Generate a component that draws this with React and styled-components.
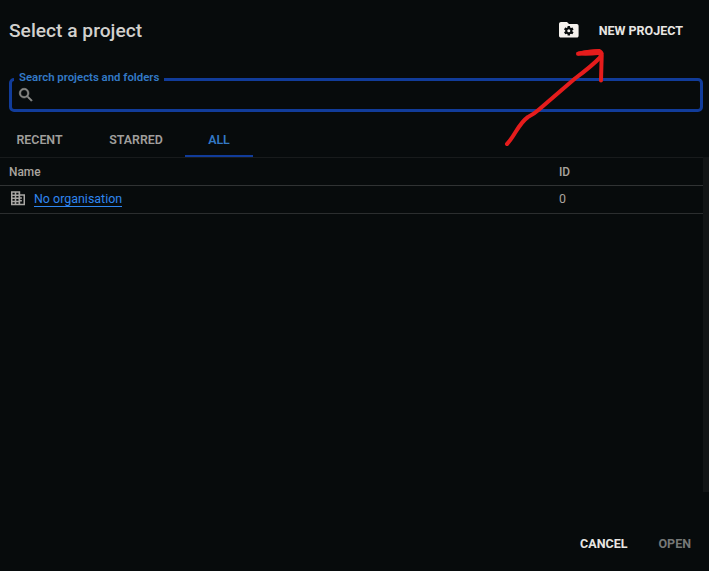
import React from 'react';
import styled, { createGlobalStyle } from 'styled-components';

const GlobalStyle = createGlobalStyle`
  *, *::before, *::after { box-sizing: border-box; }
  html, body { margin: 0; background: #070b0c; }
  body { overflow: hidden; font-family: Roboto, "Liberation Sans", sans-serif; }
  button { font-family: inherit; border: 0; padding: 0; background: none; }
`;

const Dialog = styled.main`
  position: relative;
  width: 709px;
  height: 571px;
  display: flex;
  flex-direction: column;
  background: #070b0c;
  color: #c9c9c7;
`;

const Header = styled.header`
  height: 78px;
  padding: 18px 26px 0 9px;
  display: flex;
  align-items: flex-start;
  justify-content: space-between;
`;

const Title = styled.h1`
  margin: 0;
  font-size: 19.2px;
  line-height: 25px;
  font-weight: 500;
  color: #d2d1ce;
  white-space: nowrap;
`;

const TextButton = styled.button`
  display: flex;
  align-items: center;
  gap: 18px;
  height: 24px;
  font-size: 12.5px;
  font-weight: 700;
  color: ${(p) => (p.$muted ? '#767877' : '#e8e6e3')};
  white-space: nowrap;
`;

const SearchField = styled.div`
  position: relative;
  height: 34px;
  margin: 0 6px 0 9px;
  padding-left: 5px;
  border: 3px solid #113c9a;
  border-radius: 5px;
  display: flex;
  align-items: center;
`;

const FieldLabel = styled.label`
  position: absolute;
  top: -11px;
  left: 2px;
  width: 150px;
  height: 14px;
  padding-left: 5px;
  background: #070b0c;
  color: #3379c6;
  font-size: 11.4px;
  line-height: 14px;
  font-weight: 600;
  white-space: nowrap;
`;

const Tabs = styled.nav`
  display: flex;
  height: 45px;
  padding-top: 11px;
`;

const Tab = styled.button`
  width: ${(p) => p.$width}px;
  margin-left: ${(p) => p.$gap || 0}px;
  height: 34px;
  font-size: 12.4px;
  font-weight: 600;
  color: ${(p) => (p.$active ? '#3379c6' : '#a09f9c')};
  border-bottom: 2px solid ${(p) => (p.$active ? '#113c9a' : 'transparent')};
`;

const ListArea = styled.section`
  height: 335px;
  display: flex;
`;

const Table = styled.div`
  flex: 1;
  border-top: 1px solid #181b1c;
`;

const Row = styled.div`
  display: grid;
  grid-template-columns: 550px 1fr;
  align-items: center;
  height: 28px;
  padding: 0 0 ${(p) => (p.$header ? 0 : 2)}px 9px;
  border-bottom: 1px solid ${(p) => (p.$header ? '#303334' : '#2b2e2f')};
  font-size: ${(p) => (p.$header ? 11.9 : 12.4)}px;
  font-weight: ${(p) => (p.$header ? 500 : 400)};
  color: #aaa59f;
`;

const NameCell = styled.div`
  display: flex;
  align-items: center;
  gap: 8px;
`;

const ProjectLink = styled.a`
  height: 16px;
  line-height: 16px;
  font-size: 12.45px;
  color: #2f86f0;
  border-bottom: 1px solid #2f86f0;
  white-space: nowrap;
`;

const ScrollTrack = styled.div`
  width: 6px;
  background: #121516;
`;

const Footer = styled.footer`
  flex: 1;
  display: flex;
  justify-content: flex-end;
  gap: 31px;
  padding: 39px 18px 0 0;
`;

const Arrow = styled.svg`
  position: absolute;
  left: 500px;
  top: 44px;
  pointer-events: none;
`;

const FolderGear = () => (
  <svg width="24" height="24" viewBox="0 0 24 24">
    <path
      fill="#f5f2ee"
      d="M4 4C2.9 4 2 4.9 2 6V17.7C2 18.8 2.8 19.6 4 19.6H19.8C20.9 19.6 21.6 18.8 21.6 17.7V8C21.6 6.9 20.9 6 19.8 6H12L10 4Z"
    />
    <g transform="translate(11.8 12.8)" fill="#070b0c">
      <circle r="3.5" />
      {[0, 60, 120].map((a) => (
        <rect key={a} x="-1.25" y="-4.8" width="2.5" height="9.6" rx=".3" transform={`rotate(${a})`} />
      ))}
      <circle r="1.5" fill="#f5f2ee" />
    </g>
  </svg>
);

const SearchIcon = () => (
  <svg width="18" height="18" viewBox="0 0 24 24" fill="#8b8b88" stroke="#8b8b88" strokeWidth=".7">
    <path d="M15.5 14h-.79l-.28-.27A6.47 6.47 0 0 0 16 9.5 6.5 6.5 0 1 0 9.5 16c1.61 0 3.09-.59 4.23-1.57l.27.28v.79l5 4.99L20.49 19l-4.99-5zm-6 0C7.01 14 5 11.99 5 9.5S7.01 5 9.5 5 14 7.01 14 9.5 11.99 14 9.5 14z" />
  </svg>
);

const BuildingIcon = () => (
  <svg width="17" height="18" viewBox="0 0 17 18">
    <path
      fill="#a8a6a3"
      fillRule="evenodd"
      d="M2 1.2H11.2V4.2H16V15.3H2ZM3.5 2.8V4.5H5.7V2.8ZM7.3 2.8V4.5H9.5V2.8ZM3.5 6V7.6H5.7V6ZM7.3 6V7.6H9.5V6ZM3.5 9.1V10.7H5.7V9.1ZM7.3 9.1V10.7H9.5V9.1ZM3.5 12.2V13.8H5.7V12.2ZM7.3 12.2V13.8H9.5V12.2ZM11.2 5.7V7.3H12.9V8.7H11.2V10.1H12.9V11.5H11.2V13.8H14.5V5.7Z"
    />
  </svg>
);

export default function App() {
  return (
    <>
      <GlobalStyle />
      <Dialog>
        <Header>
          <Title>Select a project</Title>
          <TextButton>
            <FolderGear />
            NEW PROJECT
          </TextButton>
        </Header>
        <SearchField>
          <FieldLabel>Search projects and folders</FieldLabel>
          <SearchIcon />
        </SearchField>
        <Tabs>
          <Tab $width={79}>RECENT</Tab>
          <Tab $width={86} $gap={14}>STARRED</Tab>
          <Tab $width={68} $gap={6} $active>ALL</Tab>
        </Tabs>
        <ListArea>
          <Table>
            <Row $header>
              <span>Name</span>
              <span>ID</span>
            </Row>
            <Row>
              <NameCell>
                <BuildingIcon />
                <ProjectLink>No organisation</ProjectLink>
              </NameCell>
              <span>0</span>
            </Row>
          </Table>
          <ScrollTrack />
        </ListArea>
        <Footer>
          <TextButton>CANCEL</TextButton>
          <TextButton $muted>OPEN</TextButton>
        </Footer>
        <Arrow width="110" height="106" viewBox="0 0 110 106" fill="none">
          <g stroke="#e51c1c" strokeWidth="4" strokeLinecap="round" strokeLinejoin="round">
            <path d="M7 100C15 92 18 80 28 73Q34 70 39 65.5L75 34.5Q92 22 101 12.5" />
            <path d="M78 9.8Q90 7 99 7Q101.7 8 101.7 11L101 36.5" />
          </g>
          <path fill="#e51c1c" d="M78 11.5Q90 12 98 11L102 14L103.5 9L99 5.2Q88 5.2 78 7.8Z" />
        </Arrow>
      </Dialog>
    </>
  );
}
